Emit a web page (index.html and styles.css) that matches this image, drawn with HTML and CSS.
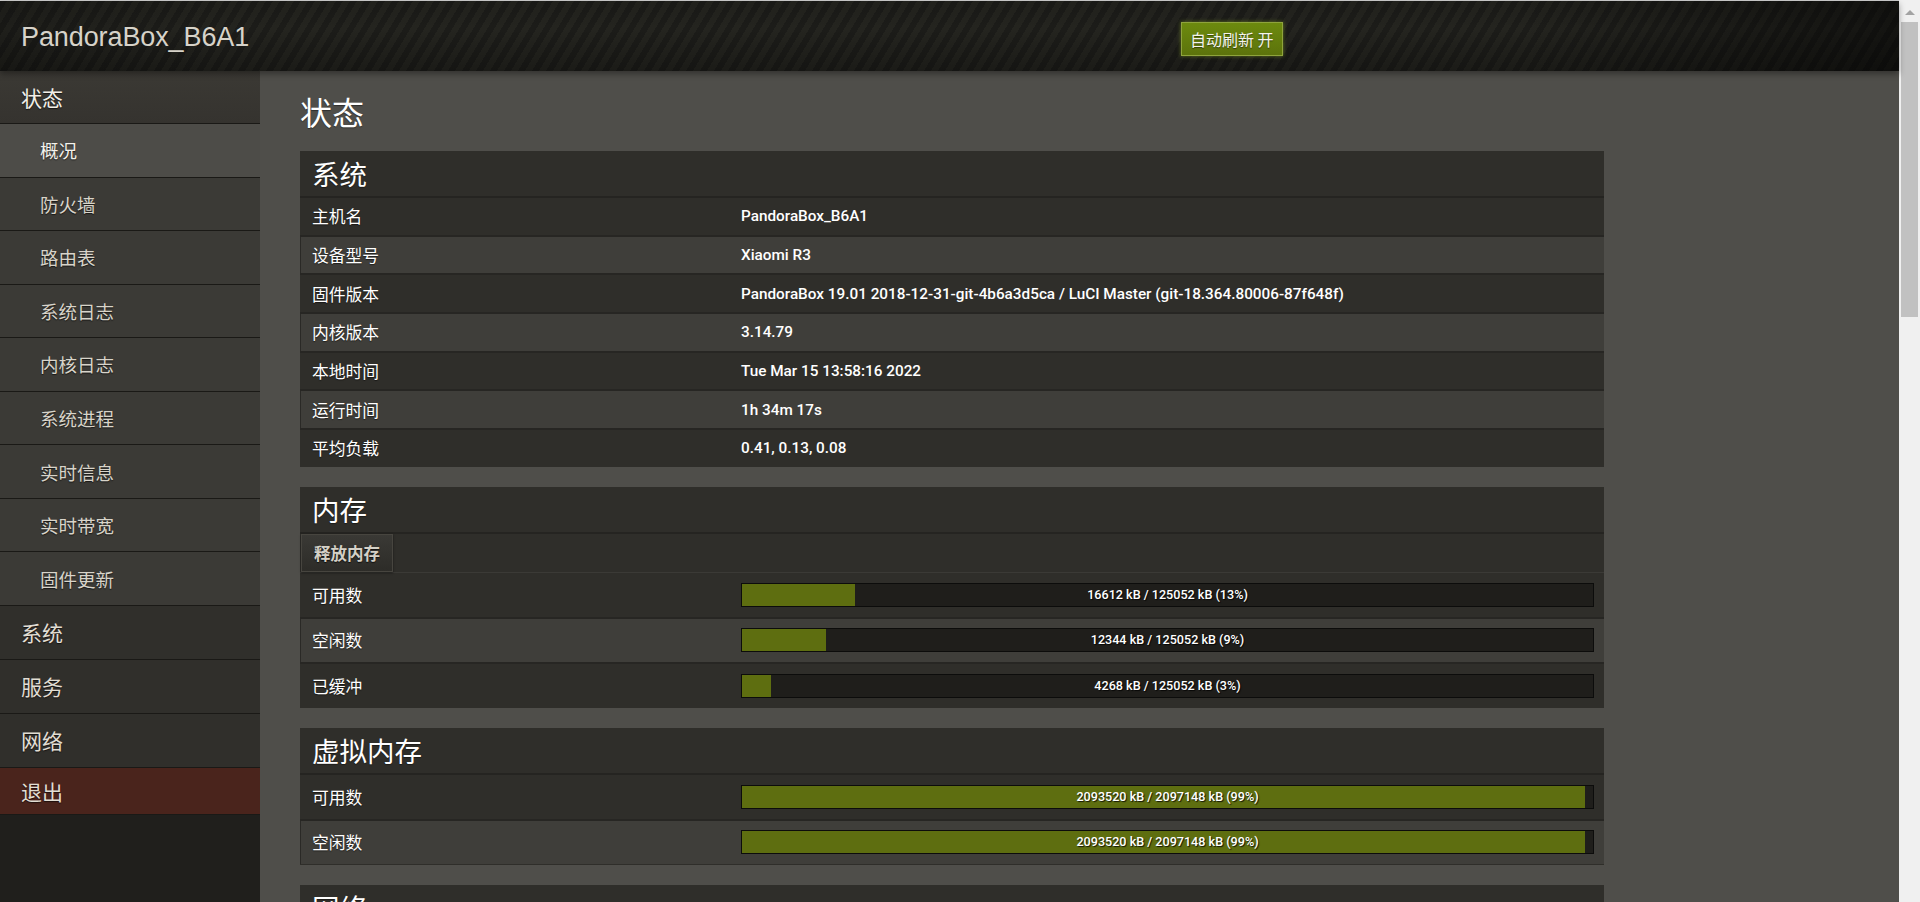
FILE: index.html
```html
<!DOCTYPE html>
<html lang="zh-CN">
<head>
<meta charset="utf-8">
<title>PandoraBox_B6A1 - 状态 - 概况</title>
<link rel="stylesheet" href="styles.css">
</head>
<body>
<div class="app">
  <div class="page">
    <header class="topbar">
      <div class="brand">PandoraBox_B6A1</div>
      <span class="refresh">自动刷新 开</span>
    </header>
    <div class="body">
      <nav class="sidebar">
        <div class="nav-head">状态</div>
        <div class="nav-sub active">概况</div>
        <div class="nav-sub">防火墙</div>
        <div class="nav-sub">路由表</div>
        <div class="nav-sub">系统日志</div>
        <div class="nav-sub">内核日志</div>
        <div class="nav-sub">系统进程</div>
        <div class="nav-sub">实时信息</div>
        <div class="nav-sub">实时带宽</div>
        <div class="nav-sub">固件更新</div>
        <div class="nav-top">系统</div>
        <div class="nav-top">服务</div>
        <div class="nav-top">网络</div>
        <div class="nav-logout">退出</div>
      </nav>
      <main class="main">
        <h1 class="page-title">状态</h1>

        <section class="card">
          <h2 class="card-title">系统</h2>
          <div class="row"><div class="label">主机名</div><div class="value">PandoraBox_B6A1</div></div>
          <div class="row alt"><div class="label">设备型号</div><div class="value">Xiaomi R3</div></div>
          <div class="row"><div class="label">固件版本</div><div class="value">PandoraBox 19.01 2018-12-31-git-4b6a3d5ca / LuCI Master (git-18.364.80006-87f648f)</div></div>
          <div class="row alt"><div class="label">内核版本</div><div class="value">3.14.79</div></div>
          <div class="row"><div class="label">本地时间</div><div class="value">Tue Mar 15 13:58:16 2022</div></div>
          <div class="row alt"><div class="label">运行时间</div><div class="value">1h 34m 17s</div></div>
          <div class="row"><div class="label">平均负载</div><div class="value">0.41, 0.13, 0.08</div></div>
        </section>

        <section class="card">
          <h2 class="card-title">内存</h2>
          <div class="btn-row"><span class="btn">释放内存</span></div>
          <div class="row tall"><div class="label">可用数</div><div class="value"><div class="bar"><div class="fill" style="width:13.28%"></div><span class="bar-text">16612 kB / 125052 kB (13%)</span></div></div></div>
          <div class="row tall alt"><div class="label">空闲数</div><div class="value"><div class="bar"><div class="fill" style="width:9.87%"></div><span class="bar-text">12344 kB / 125052 kB (9%)</span></div></div></div>
          <div class="row tall"><div class="label">已缓冲</div><div class="value"><div class="bar"><div class="fill" style="width:3.41%"></div><span class="bar-text">4268 kB / 125052 kB (3%)</span></div></div></div>
        </section>

        <section class="card">
          <h2 class="card-title">虚拟内存</h2>
          <div class="row tall"><div class="label">可用数</div><div class="value"><div class="bar"><div class="fill" style="width:99.1%"></div><span class="bar-text">2093520 kB / 2097148 kB (99%)</span></div></div></div>
          <div class="row tall alt"><div class="label">空闲数</div><div class="value"><div class="bar"><div class="fill" style="width:99.1%"></div><span class="bar-text">2093520 kB / 2097148 kB (99%)</span></div></div></div>
        </section>

        <section class="card">
          <h2 class="card-title">网络</h2>
        </section>
      </main>
    </div>
  </div>
  <div class="scrollbar">
    <div class="sb-arrow"></div>
    <div class="sb-thumb"></div>
  </div>
</div>
</body>
</html>
```

FILE: styles.css
```css
html, body {
  margin: 0;
  padding: 0;
  height: 902px;
  overflow: hidden;
  background: #4f4e4a;
}

body {
  font-family: "Liberation Sans", "Noto Sans CJK SC", sans-serif;
  color: #fff;
}

.app {
  display: flex;
  height: 902px;
}

.page {
  flex: 1;
  display: flex;
  flex-direction: column;
  border-top: 1px solid #cdcdcd;
  min-width: 0;
}

/* ---------- header ---------- */
.topbar {
  height: 70px;
  flex: 0 0 70px;
  display: flex;
  align-items: center;
  background:
    linear-gradient(to right, rgba(0,0,0,0.15) 0%, rgba(0,0,0,0) 12%, rgba(0,0,0,0) 80%, rgba(0,0,0,0.45) 100%),
    linear-gradient(to bottom, rgba(0,0,0,0.1) 0%, rgba(0,0,0,0) 40%, rgba(0,0,0,0.25) 100%),
    repeating-linear-gradient(121deg, #1c1c19 0px, #1c1c19 6px, #24241f 6px, #24241f 12px);
  box-shadow: 0 3px 6px rgba(0,0,0,0.35);
  position: relative;
  z-index: 2;
}

.brand {
  width: 1160px;
  padding-left: 21px;
  font-family: "Liberation Sans", sans-serif;
  font-size: 27px;
  color: #d7d3c9;
  letter-spacing: -0.1px;
  padding-top: 2px;
}

.refresh {
  display: inline-block;
  height: 32px;
  line-height: 32px;
  padding: 0 8px;
  margin-top: 5px;
  font-family: "Noto Sans CJK SC", sans-serif;
  font-size: 16px;
  color: #f4f4ec;
  background: linear-gradient(to bottom, #6c8a0e 0%, #5c730c 100%);
  border: 1px solid #8fa43c;
  box-shadow: 0 0 4px rgba(140, 170, 40, 0.6);
  text-shadow: 0 1px 1px rgba(0,0,0,0.5);
}

/* ---------- body ---------- */
.body {
  flex: 1;
  display: flex;
  min-height: 0;
}

.sidebar {
  width: 260px;
  flex: 0 0 260px;
  background: #201f1c;
  display: flex;
  flex-direction: column;
  font-family: "Noto Sans CJK SC", sans-serif;
}

.nav-head,
.nav-top,
.nav-logout {
  padding-left: 21px;
  font-size: 21px;
  color: #e2ded4;
  text-shadow: 0 1px 1px rgba(0,0,0,0.6);
  border-bottom: 1px solid #1a1916;
  display: flex;
  align-items: center;
}

.nav-head {
  height: 52px;
  background: linear-gradient(to bottom, #3b3934 0%, #35332f 100%);
  color: #f2efe8;
}

.nav-sub {
  height: 52.55px;
  padding-left: 40px;
  font-size: 18.5px;
  color: #d8d4ca;
  background: #3b3a36;
  border-bottom: 1px solid #1a1916;
  display: flex;
  align-items: center;
  text-shadow: 0 1px 1px rgba(0,0,0,0.6);
}

.nav-sub.active {
  background: #4d4c48;
  color: #f4f2ec;
}

.nav-top {
  height: 53px;
  background: #302f2b;
}

.nav-logout {
  height: 46px;
  background: #4a241c;
}

/* ---------- main ---------- */
.main {
  flex: 1;
  padding: 21px 0 0 40px;
  min-width: 0;
}

.page-title {
  margin: 0 0 21px 0;
  font-family: "Noto Sans CJK SC", sans-serif;
  font-weight: normal;
  font-size: 32px;
  line-height: 38px;
  color: #fff;
  text-shadow: 0 1px 1px rgba(0,0,0,0.4);
}

.card {
  width: 1304px;
  background: #2f2e2a;
  margin-bottom: 20px;
  padding-bottom: 1px;
}

.card-title {
  margin: 0;
  height: 45px;
  line-height: 45px;
  padding-left: 12px;
  font-family: "Noto Sans CJK SC", sans-serif;
  font-weight: normal;
  font-size: 27.5px;
  color: #fff;
  border-bottom: 2px solid #252421;
  text-shadow: 0 1px 1px rgba(0,0,0,0.4);
}

.row {
  display: grid;
  grid-template-columns: 429px 1fr;
  align-items: center;
  height: 36.65px;
  padding: 0 10px 0 12px;
  border-bottom: 2px solid #272623;
}

.row.tall {
  height: 43.3px;
}

.row.alt {
  background: #3f3e3a;
  box-shadow: inset 1px 0 0 #2a2926;
}

.row:last-child {
  border-bottom: none;
}

.label {
  font-family: "Noto Sans CJK SC", sans-serif;
  font-size: 16.8px;
  color: #fff;
  text-shadow: 0 1px 1px rgba(0,0,0,0.5);
}

.value {
  font-family: "Roboto", "Liberation Sans", sans-serif;
  font-weight: 500;
  font-size: 15.3px;
  color: #fff;
  white-space: nowrap;
}

.btn-row {
  height: 38px;
  border-bottom: 1px solid #3b3a36;
  display: flex;
  align-items: stretch;
}

.btn {
  display: flex;
  align-items: center;
  margin-left: 1px;
  padding: 0 12px;
  font-family: "Noto Sans CJK SC", sans-serif;
  font-size: 16.5px;
  font-weight: bold;
  color: #d5d1c7;
  background: linear-gradient(to bottom, #3a3935 0%, #2d2c28 100%);
  border: 1px solid #47453f;
  box-shadow: 0 1px 2px rgba(0,0,0,0.5);
  text-shadow: 0 1px 1px rgba(0,0,0,0.7);
}

.bar {
  position: relative;
  height: 22px;
  border: 1px solid #0c0c0b;
  background: #1f1e1b;
}

.fill {
  height: 100%;
  background: #5e6e10;
}

.bar-text {
  position: absolute;
  left: 0;
  right: 0;
  top: 0;
  line-height: 22px;
  text-align: center;
  font-family: "Roboto", "Liberation Sans", sans-serif;
  font-weight: 500;
  font-size: 12.6px;
  color: #fff;
  text-shadow: 1px 1px 1px rgba(0,0,0,0.8);
}

/* ---------- fake scrollbar ---------- */
.scrollbar {
  width: 21px;
  flex: 0 0 21px;
  background: #f0f0f0;
  display: flex;
  flex-direction: column;
  align-items: center;
}

.sb-arrow {
  width: 0;
  height: 0;
  margin-top: 10px;
  border-left: 5px solid transparent;
  border-right: 5px solid transparent;
  border-bottom: 5px solid #a3a3a3;
}

.sb-thumb {
  width: 17px;
  height: 295px;
  margin-top: 7px;
  background: #c1c1c1;
}
```
